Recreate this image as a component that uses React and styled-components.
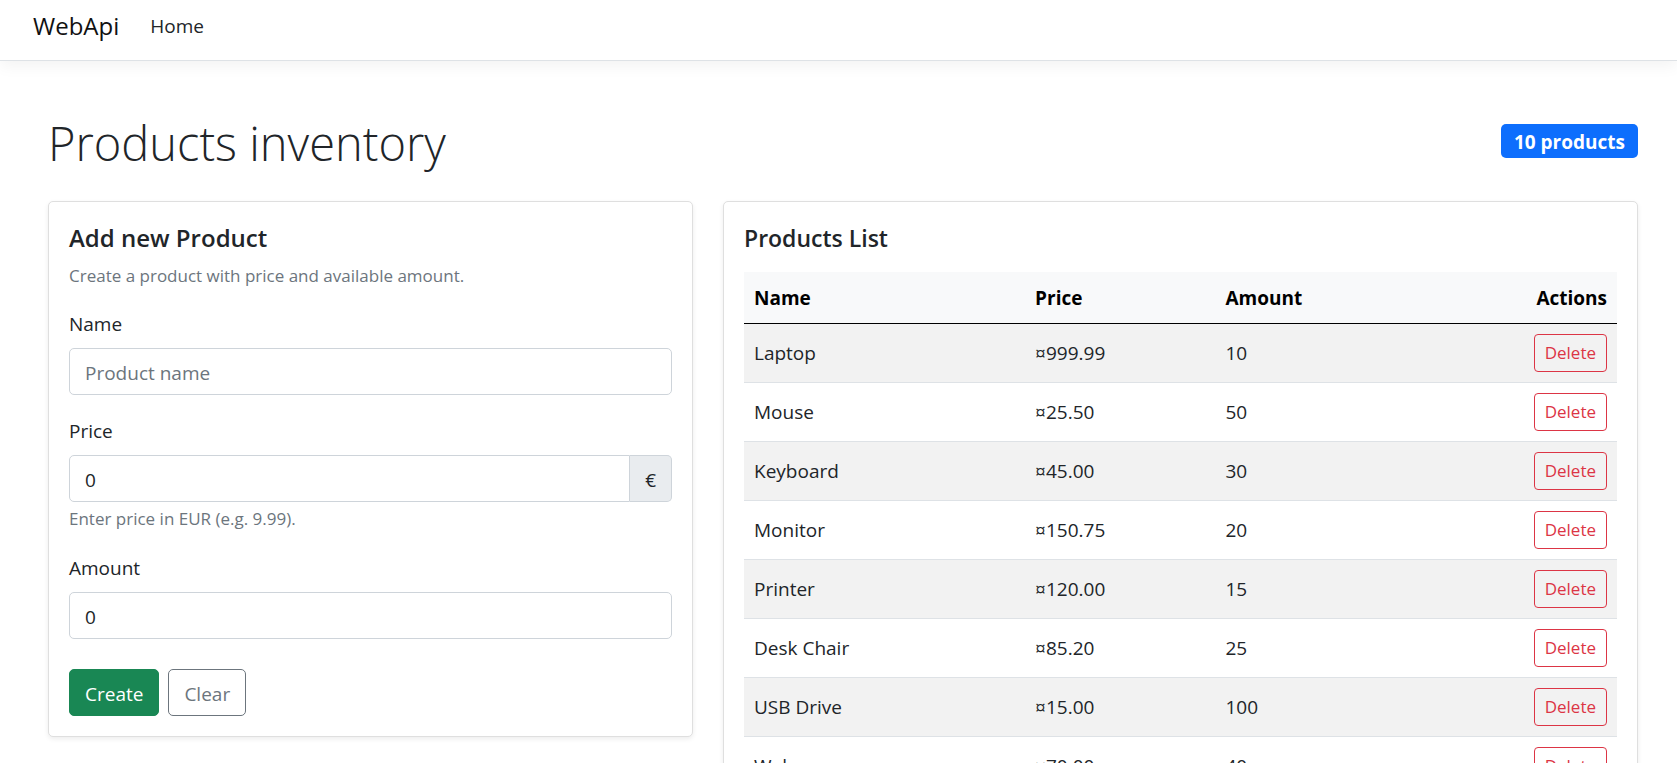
import React from "react";
import styled, { createGlobalStyle } from "styled-components";

const GlobalStyle = createGlobalStyle`
  *, *::before, *::after { box-sizing: border-box; }
  body {
    margin: 0;
    background: #fff;
    color: #212529;
    font-family: "Open Sans", "Noto Sans", sans-serif;
    font-size: 19px;
    line-height: 30px;
  }
  h1, h2, p { margin: 0; }
  button, input { font: inherit; }
`;

const Header = styled.header`
  display: flex;
  align-items: flex-start;
  gap: 31px;
  height: 61px;
  padding: 8px 33px;
  border-bottom: 1px solid #dee2e6;
  box-shadow: 0 5px 15px rgba(0, 0, 0, 0.05);
`;

const Brand = styled.a`
  color: #111;
  font-size: 24px;
  line-height: 36px;
  text-decoration: none;
`;

const NavLink = styled.a`
  color: #212529;
  line-height: 36px;
  text-decoration: none;
`;

const Main = styled.main`
  padding: 48px 39px 30px 48px;
`;

const PageHead = styled.div`
  display: flex;
  align-items: center;
  justify-content: space-between;
  margin-bottom: 28px;
`;

const PageTitle = styled.h1`
  padding-top: 4px;
  font-size: 47px;
  font-weight: 300;
  line-height: 60px;
`;

const Badge = styled.span`
  padding: 3px 13px 1px;
  border-radius: 5px;
  background: #0d6efd;
  color: #fff;
  font-weight: 700;
  line-height: 30px;
`;

const Columns = styled.div`
  display: grid;
  grid-template-columns: minmax(0, 43fr) minmax(0, 61fr);
  align-items: start;
  gap: 30px;
`;

const Card = styled.section`
  padding: 20px;
  border: 1px solid #dfdfdf;
  border-radius: 5px;
  background: #fff;
  box-shadow: 0 2px 5px rgba(0, 0, 0, 0.075);
`;

const CardTitle = styled.h2`
  margin-bottom: ${(p) => p.$gap}px;
  font-size: ${(p) => p.$size}px;
  font-weight: 600;
  line-height: 32px;
`;

const Lead = styled.p`
  margin-bottom: 20px;
  color: #6c757d;
  font-size: 17px;
  line-height: 26px;
`;

const Field = styled.div`
  margin-bottom: ${(p) => (p.$last ? 30 : 21)}px;
`;

const Label = styled.label`
  display: block;
  margin-bottom: 9px;
`;

const InputGroup = styled.div`
  display: flex;
`;

const Input = styled.input`
  flex: 1;
  width: 100%;
  min-width: 0;
  height: 47px;
  padding: 2px 15px 0;
  border: 1px solid #ced4da;
  border-radius: ${(p) => (p.$joined ? "5px 0 0 5px" : "5px")};
  background: #fff;
  color: #212529;
  &::placeholder { color: #6c757d; opacity: 1; }
`;

const Addon = styled.span`
  display: flex;
  align-items: center;
  padding: 2px 15px 0;
  border: 1px solid #ced4da;
  border-left: 0;
  border-radius: 0 5px 5px 0;
  background: #e9ecef;
`;

const Help = styled.p`
  margin-top: 4px;
  color: #6c757d;
  font-size: 17px;
  line-height: 26px;
`;

const Actions = styled.div`
  display: flex;
  gap: 9px;
`;

const Button = styled.button`
  height: 47px;
  padding: 2px 15px 0;
  border: 1px solid ${(p) => (p.$primary ? "#198754" : "#6c757d")};
  border-radius: 5px;
  background: ${(p) => (p.$primary ? "#198754" : "transparent")};
  color: ${(p) => (p.$primary ? "#fff" : "#6c757d")};
`;

const DeleteButton = styled.button`
  display: block;
  height: 38px;
  margin-left: auto;
  padding: 0 10px;
  border: 1px solid #dc3545;
  border-radius: 4px;
  background: transparent;
  color: #dc3545;
  font-size: 17px;
  line-height: 26px;
`;

const Table = styled.table`
  width: 100%;
  table-layout: fixed;
  border-collapse: separate;
  border-spacing: 0;
`;

const HeadCell = styled.th`
  width: ${(p) => p.$width};
  padding: 11px 10px 10px;
  border-bottom: 1px solid #000;
  background: #f8f9fa;
  color: #000;
  font-weight: 700;
  text-align: ${(p) => (p.$end ? "right" : "left")};
`;

const Row = styled.tr`
  background: ${(p) => (p.$striped ? "#f2f2f2" : "#fff")};
`;

const Cell = styled.td`
  padding: 10px;
  border-bottom: 1px solid #dee2e6;
  vertical-align: middle;
  line-height: 30px;
`;

const products = [
  { name: "Laptop", price: "999.99", amount: 10 },
  { name: "Mouse", price: "25.50", amount: 50 },
  { name: "Keyboard", price: "45.00", amount: 30 },
  { name: "Monitor", price: "150.75", amount: 20 },
  { name: "Printer", price: "120.00", amount: 15 },
  { name: "Desk Chair", price: "85.20", amount: 25 },
  { name: "USB Drive", price: "15.00", amount: 100 },
  { name: "Webcam", price: "70.00", amount: 40 },
];

function ProductForm() {
  return (
    <Card>
      <CardTitle $size={24} $gap={9}>Add new Product</CardTitle>
      <Lead>Create a product with price and available amount.</Lead>
      <form onSubmit={(e) => e.preventDefault()}>
        <Field>
          <Label htmlFor="name">Name</Label>
          <InputGroup>
            <Input id="name" type="text" placeholder="Product name" />
          </InputGroup>
        </Field>
        <Field>
          <Label htmlFor="price">Price</Label>
          <InputGroup>
            <Input id="price" type="text" inputMode="decimal" defaultValue="0" $joined />
            <Addon>€</Addon>
          </InputGroup>
          <Help>Enter price in EUR (e.g. 9.99).</Help>
        </Field>
        <Field $last>
          <Label htmlFor="amount">Amount</Label>
          <InputGroup>
            <Input id="amount" type="text" inputMode="numeric" defaultValue="0" />
          </InputGroup>
        </Field>
        <Actions>
          <Button type="submit" $primary>Create</Button>
          <Button type="reset">Clear</Button>
        </Actions>
      </form>
    </Card>
  );
}

function ProductTable() {
  return (
    <Card>
      <CardTitle $size={23} $gap={18}>Products List</CardTitle>
      <Table>
        <thead>
          <tr>
            <HeadCell scope="col" $width="32.2%">Name</HeadCell>
            <HeadCell scope="col" $width="21.8%">Price</HeadCell>
            <HeadCell scope="col" $width="22%">Amount</HeadCell>
            <HeadCell scope="col" $width="24%" $end>Actions</HeadCell>
          </tr>
        </thead>
        <tbody>
          {products.map((p, i) => (
            <Row key={p.name} $striped={i % 2 === 0}>
              <Cell>{p.name}</Cell>
              <Cell>{`¤${p.price}`}</Cell>
              <Cell>{p.amount}</Cell>
              <Cell><DeleteButton type="button">Delete</DeleteButton></Cell>
            </Row>
          ))}
        </tbody>
      </Table>
    </Card>
  );
}

export default function App() {
  return (
    <>
      <GlobalStyle />
      <Header>
        <Brand href="#">WebApi</Brand>
        <nav><NavLink href="#">Home</NavLink></nav>
      </Header>
      <Main>
        <PageHead>
          <PageTitle>Products inventory</PageTitle>
          <Badge>10 products</Badge>
        </PageHead>
        <Columns>
          <ProductForm />
          <ProductTable />
        </Columns>
      </Main>
    </>
  );
}
